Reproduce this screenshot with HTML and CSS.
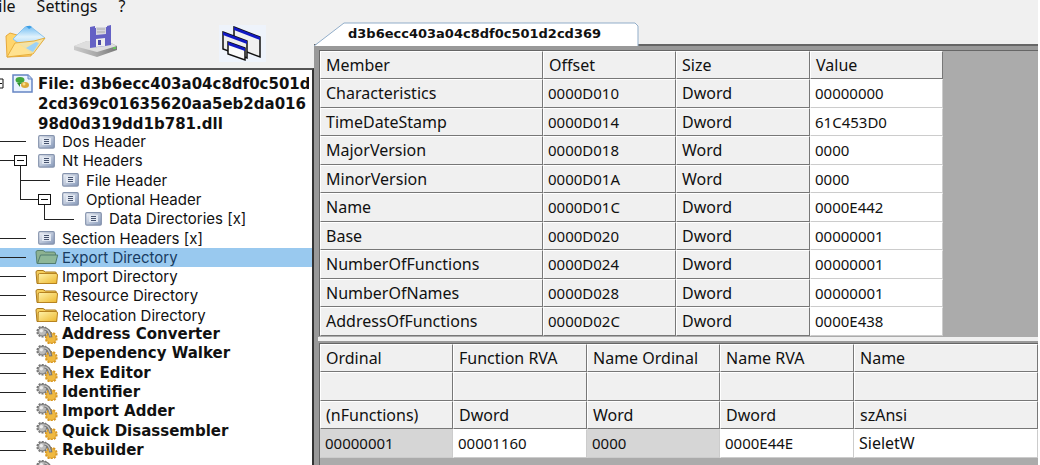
FILE: index.html
```html
<!DOCTYPE html>
<html lang="en">
<head>
<meta charset="utf-8">
<title>PE header viewer</title>
<link rel="stylesheet" href="styles.css">
</head>
<body>
<svg class="defs" aria-hidden="true">
  <defs>
    <linearGradient id="gold" x1="0" y1="0" x2="1" y2="1"><stop offset="0" stop-color="#fff3ac"/><stop offset="1" stop-color="#edb72c"/></linearGradient>
    <linearGradient id="silver" x1="0" y1="0" x2="1" y2="1"><stop offset="0" stop-color="#f4f6fa"/><stop offset="1" stop-color="#8497b8"/></linearGradient>
    <linearGradient id="sky" x1="0" y1="0" x2="0" y2="1"><stop offset="0" stop-color="#6fbcf3"/><stop offset=".4" stop-color="#e0f2fc"/><stop offset="1" stop-color="#72baf0"/></linearGradient>
    <linearGradient id="steel" x1="0" y1="0" x2="1" y2="0"><stop offset="0" stop-color="#ccc"/><stop offset=".5" stop-color="#aaa"/><stop offset="1" stop-color="#777"/></linearGradient>
    <symbol id="page" viewBox="0 0 17 14"><rect x=".7" y=".7" width="15.6" height="12.4" rx="1.2" fill="url(#silver)" stroke="#8593ad" stroke-width="1.2"/><path d="M4 3h9v7H4z" fill="#e2e8f2"/><path d="M6 4.500h5M6 6.500h5M6 8.500h5" stroke="#46536e"/></symbol>
    <symbol id="folder" viewBox="0 0 24 16"><path d="M2 14.500 1 3Q1 1.500 3 1.500h5L10.500 3H20q1.500 0 1.500 1.500V14.500z" fill="#f5ce5c" stroke="#a9781b"/><path d="M3 14.500 3.200 6q0-1.500 1.500-1.500H21q1.500 0 1.500 1.500l-.8 8.500z" fill="url(#gold)" stroke="#b78321"/></symbol>
    <symbol id="folder-open" viewBox="0 0 24 16"><path d="M2 14.500 1 3Q1 1.500 3 1.500h5L10.500 3H19q1.500 0 1.500 2v9.500z" fill="#8db291" stroke="#58816e"/><path d="M2.500 14.500 5.500 6h17.200L20.500 14.500z" fill="#8db798" stroke="#517c70"/></symbol>
    <symbol id="gears" viewBox="0 0 24 19"><circle cx="7" cy="6" r="5" fill="none" stroke="#777" stroke-width="2.500" stroke-dasharray="2 1.200"/><circle cx="7" cy="6" r="4.500" fill="#bbb" stroke="#777"/><circle cx="6" cy="5" r="1.800" fill="#eee"/><circle cx="16.500" cy="13" r="5.500" fill="none" stroke="#d8961e" stroke-width="2.500" stroke-dasharray="2.200 1.200"/><circle cx="16.500" cy="13" r="5" fill="#f0b940" stroke="#dba02c"/><path d="M9 3q6 0 7 9" fill="none" stroke="#777" stroke-width="3.500"/><path d="M9 3q5 0 6.500 8" fill="none" stroke="#c4c4c4" stroke-width="1.200"/></symbol>
  </defs>
</svg>
<div class="app">
  <div class="side">
    <nav class="menu"><button>File</button><button>Settings</button><button>?</button></nav>
    <div class="tools">
      <button aria-label="Open"><svg width="42" height="35" viewBox="0 0 42 35"><path d="m2 32-1-21 4-3 7 2 3 3 15 2-4 16z" fill="#ffd56c" stroke="#e7a83a"/><path d="m8 14 12-12 5-1L40 13 27 28z" fill="url(#sky)" stroke="#8bc5ee"/><path d="m21 1 3 3 3-2-2-1z" fill="#3b9de5"/><path d="m2 32 8-14 19-2 11-3L28 29z" fill="#ffe496" fill-opacity=".85" stroke="#e7ae3b"/><path d="m21 23 10-6 3 1-6 9z" fill="#9cd2f6"/></svg></button>
      <button aria-label="Save"><svg width="46" height="34" viewBox="0 0 46 34"><path d="m1 21 13-5h20l10 5v4L24 32 1 25z" fill="url(#steel)"/><path d="m1 21 13-5h20l10 5-20 6z" fill="#dedede"/><path d="m17 2 5-1v2l12-1V1l4-1v20l-6 1-15 2z" fill="#6461c5"/><path d="M23 2h10v7l-10 1z" fill="#d7d7df"/><path d="M24 4h8M24 7h8" stroke="#aaa"/><path d="m23 14 9-1v8l-9 1z" fill="#eee"/><path d="M25 15h3v5h-3z" fill="#4b4aa4"/><path d="M40 22h3v2h-3z" fill="#67c45d"/></svg></button>
      <button class="cascade" aria-label="Windows"><svg width="47" height="37" viewBox="0 0 47 37"><path d="M15 2 41 12v20L15 22z" fill="#f0f0f0" stroke="#111" stroke-width="1.500"/><path d="m15 2 26 10v3L15 5z" fill="#1118c3"/><path d="m4 7 24 9v17L4 24z" fill="#eee" stroke="#111" stroke-width="1.500"/><path d="m4 7 24 9v3L4 10z" fill="#1118c3"/><path d="m9 17 17 6v12L9 29z" fill="#fafafa" stroke="#111" stroke-width="1.500"/><path d="m9 17 17 6v3L9 20z" fill="#1118c3"/></svg></button>
    </div>
    <ul class="tree">
      <li class="root"><svg class="box edge" width="5" height="12" viewBox="0 0 5 12"><path d="M0 1h3v9H0M0 5.500h2" fill="none" stroke="#111"/></svg><svg class="file-icon" width="21" height="19" viewBox="0 0 21 19"><path d="M1 1h15l4 4v13H1z" fill="#eaf3ff" stroke="#6685c3" stroke-width="1.500"/><path d="M16 1v4h4" fill="#bdd2ef" stroke="#6685c3"/><ellipse cx="8" cy="6" rx="4.500" ry="3" fill="#41a63c"/><path d="m5 9 3 4v-3l5-1z" fill="#2c8e2e"/><ellipse cx="13" cy="11" rx="4" ry="3" fill="#dca83a"/><circle cx="12" cy="10" r="1.500" fill="#f8df89"/></svg><span>File: d3b6ecc403a04c8df0c501d<br>2cd369c01635620aa5eb2da016<br>98d0d319dd1b781.dll</span></li>
      <li class="dash"><svg class="page"><use href="#page"/></svg><span>Dos Header</span></li>
      <li class="dash nt"><i class="minus"></i><svg class="page"><use href="#page"/></svg><span>Nt Headers</span></li>
      <li class="deep filehead"><svg class="page"><use href="#page"/></svg><span>File Header</span></li>
      <li class="deep optional"><i class="minus"></i><svg class="page"><use href="#page"/></svg><span>Optional Header</span></li>
      <li class="deeper"><svg class="page"><use href="#page"/></svg><span>Data Directories [x]</span></li>
      <li class="dash"><svg class="page"><use href="#page"/></svg><span>Section Headers [x]</span></li>
      <li class="dash selected"><svg class="wide"><use href="#folder-open"/></svg><span>Export Directory</span></li>
      <li class="dash"><svg class="wide"><use href="#folder"/></svg><span>Import Directory</span></li>
      <li class="dash"><svg class="wide"><use href="#folder"/></svg><span>Resource Directory</span></li>
      <li class="dash"><svg class="wide"><use href="#folder"/></svg><span>Relocation Directory</span></li>
      <li class="dash tool"><svg class="wide"><use href="#gears"/></svg><span>Address Converter</span></li>
      <li class="dash tool"><svg class="wide"><use href="#gears"/></svg><span>Dependency Walker</span></li>
      <li class="dash tool"><svg class="wide"><use href="#gears"/></svg><span>Hex Editor</span></li>
      <li class="dash tool"><svg class="wide"><use href="#gears"/></svg><span>Identifier</span></li>
      <li class="dash tool"><svg class="wide"><use href="#gears"/></svg><span>Import Adder</span></li>
      <li class="dash tool"><svg class="wide"><use href="#gears"/></svg><span>Quick Disassembler</span></li>
      <li class="dash tool"><svg class="wide"><use href="#gears"/></svg><span>Rebuilder</span></li>
      <li class="tail"><svg class="wide"><use href="#gears"/></svg></li>
    </ul>
  </div>
  <main class="main">
    <div class="tabs"><button class="tab"><svg class="tab-shape" width="325" height="24" viewBox="0 0 325 24"><path d="M0 24 30 1h291l3 3v20" fill="#fff" stroke="#91adc9"/></svg><span>d3b6ecc403a04c8df0c501d2cd369</span></button></div>
    <div class="panes">
      <section class="upper">
        <table class="members">
          <colgroup><col class="c-wide"><col class="c-mid"><col class="c-size"><col class="c-mid"></colgroup>
          <tr><th>Member</th><th>Offset</th><th>Size</th><th>Value</th></tr>
          <tr><th>Characteristics</th><th class="num">0000D010</th><th>Dword</th><td>00000000</td></tr>
          <tr><th>TimeDateStamp</th><th class="num">0000D014</th><th>Dword</th><td>61C453D0</td></tr>
          <tr><th>MajorVersion</th><th class="num">0000D018</th><th>Word</th><td>0000</td></tr>
          <tr><th>MinorVersion</th><th class="num">0000D01A</th><th>Word</th><td>0000</td></tr>
          <tr><th>Name</th><th class="num">0000D01C</th><th>Dword</th><td>0000E442</td></tr>
          <tr><th>Base</th><th class="num">0000D020</th><th>Dword</th><td>00000001</td></tr>
          <tr><th>NumberOfFunctions</th><th class="num">0000D024</th><th>Dword</th><td>00000001</td></tr>
          <tr><th>NumberOfNames</th><th class="num">0000D028</th><th>Dword</th><td>00000001</td></tr>
          <tr><th>AddressOfFunctions</th><th class="num">0000D02C</th><th>Dword</th><td>0000E438</td></tr>
        </table>
      </section>
      <section class="lower">
        <table class="exports">
          <colgroup><col class="c-mid"><col class="c-size"><col class="c-mid"><col class="c-size"><col></colgroup>
          <tr><th>Ordinal</th><th>Function RVA</th><th>Name Ordinal</th><th>Name RVA</th><th>Name</th></tr>
          <tr><th></th><th></th><th></th><th></th><th></th></tr>
          <tr><th>(nFunctions)</th><th>Dword</th><th>Word</th><th>Dword</th><th>szAnsi</th></tr>
          <tr><td class="locked">00000001</td><td>00001160</td><td class="locked">0000</td><td>0000E44E</td><td class="name">SieletW</td></tr>
        </table>
      </section>
    </div>
  </main>
</div>
</body>
</html>
```
FILE: styles.css
```css
* { box-sizing: border-box; }
body { margin: 0; background: #fff; color: #111; font: 16px/19px "Noto Sans", "Open Sans", sans-serif; }
button { border: 0; padding: 0; background: none; font: inherit; color: inherit; display: block; }
.defs { position: absolute; width: 0; height: 0; }
.app { display: flex; height: 100vh; overflow: hidden; padding-right: 2px; }
.side { flex: 0 0 314px; min-width: 0; display: flex; flex-direction: column; background: #f0f0f0; }
.menu { display: flex; gap: 21px; height: 16px; align-items: flex-start; margin-left: -10px; font: 16px/12px "Noto Sans", sans-serif; }
.tools { display: flex; height: 52px; padding: 9px 0 0 5px; gap: 26px; align-items: flex-start; }
.cascade { margin-left: 74px; background: #eef3fb; }
.tools svg, .tree svg { display: block; }
.tree { list-style: none; margin: 0; padding: 4px 0 0; flex: 1; min-height: 0; display: flex; flex-direction: column; background: #fff; border-top: 2px solid #555; border-right: 2px solid #333; font-family: Inter, "Liberation Sans", sans-serif; font-size: 15px; overflow: hidden; }
.tree li { flex: 1 1 0; min-height: 19px; display: flex; align-items: center; position: relative; white-space: nowrap; }
.tree .root { flex-grow: 3; align-items: flex-start; font-family: "DejaVu Sans", sans-serif; font-weight: 700; line-height: 20px; overflow: hidden; }
.edge { flex: none; margin: 4px 7px 0 0; }
.file-icon { flex: none; margin-right: 5px; }
.root span { margin-right: 3px; overflow: hidden; flex: 1; }
.page { width: 17px; height: 14px; margin-right: 7px; }
.wide { width: 24px; height: 18px; margin-right: 3px; }
.dash, .tail { padding-left: 38px; }
.dash:has(.wide), .tail { padding-left: 35px; }
.dash::before { content: ""; position: absolute; left: 0; width: 26px; border-top: 1px solid #222; }
.nt.dash::before { width: 14px; }
.minus { position: absolute; left: 14px; width: 13px; height: 11px; border: 1px solid #111; background: #fff; z-index: 1; }
.minus::after { content: ""; display: block; margin: 4px 2px 0; border-top: 1px solid #111; }
.optional .minus { left: 38px; }
.deep { padding-left: 62px; }
.deeper { padding-left: 85px; }
.deep::before, .deeper::before { content: ""; position: absolute; left: 20px; top: -50%; height: 100%; width: 29px; border: solid #222; border-width: 0 0 1px 1px; }
.optional::before { width: 18px; }
.deeper::before { left: 44px; }
.selected { background: #99c9ef; color: #183c62; }
.tree .tool { font-family: "DejaVu Sans", sans-serif; font-weight: 700; }
.tree .tail { flex: 0 0 5px; min-height: 5px; align-items: flex-start; overflow: hidden; }
.main { flex: 1; min-width: 0; display: flex; flex-direction: column; background: #f0f0f0; }
.tabs { display: flex; height: 46px; align-items: flex-end; border-bottom: 2px solid #666; }
.tab { display: grid; align-items: center; margin-bottom: -2px; font: 700 13px/20px "DejaVu Sans", sans-serif; }
.tab > * { grid-area: 1 / 1; }
.tab span { padding: 0 34px; text-align: left; }
.tab-shape { display: block; }
.panes { flex: 1; min-height: 0; display: flex; flex-direction: column; border-left: 5px solid #999; border-top: 4px solid #999; background: #ababab; }
.upper, .lower { border-left: 1px solid #666; border-top: 1px solid #666; }
.lower { flex: 1; position: relative; box-shadow: 0 -2px #999; margin-top: 7px; }
.lower::before { content: ""; position: absolute; left: -2px; right: 0; top: -7px; height: 4px; background: #f0f0f0; }
table { border-collapse: separate; border-spacing: 0; table-layout: fixed; }
.members { width: 623px; }
.exports { width: 100%; }
.c-wide { width: 223px; }
.c-mid { width: 133px; }
.c-size { width: 134px; }
tr { height: 28px; }
tr:nth-child(even) { height: 29px; }
th, td { padding: 0 0 0 5px; text-align: left; font-weight: 400; white-space: nowrap; border: 1px solid; }
th { background: #f0f0f0; border-color: #fff #777 #777 #fff; }
td, .num { padding-left: 4px; font-size: 15px; }
td { background: #fff; border-color: #fff #ccc #ccc #fff; }
td.locked { background: #d6d6d6; border-color: #d6d6d6 #ccc #ccc #d6d6d6; }
td.name { font-size: 16px; }
```
